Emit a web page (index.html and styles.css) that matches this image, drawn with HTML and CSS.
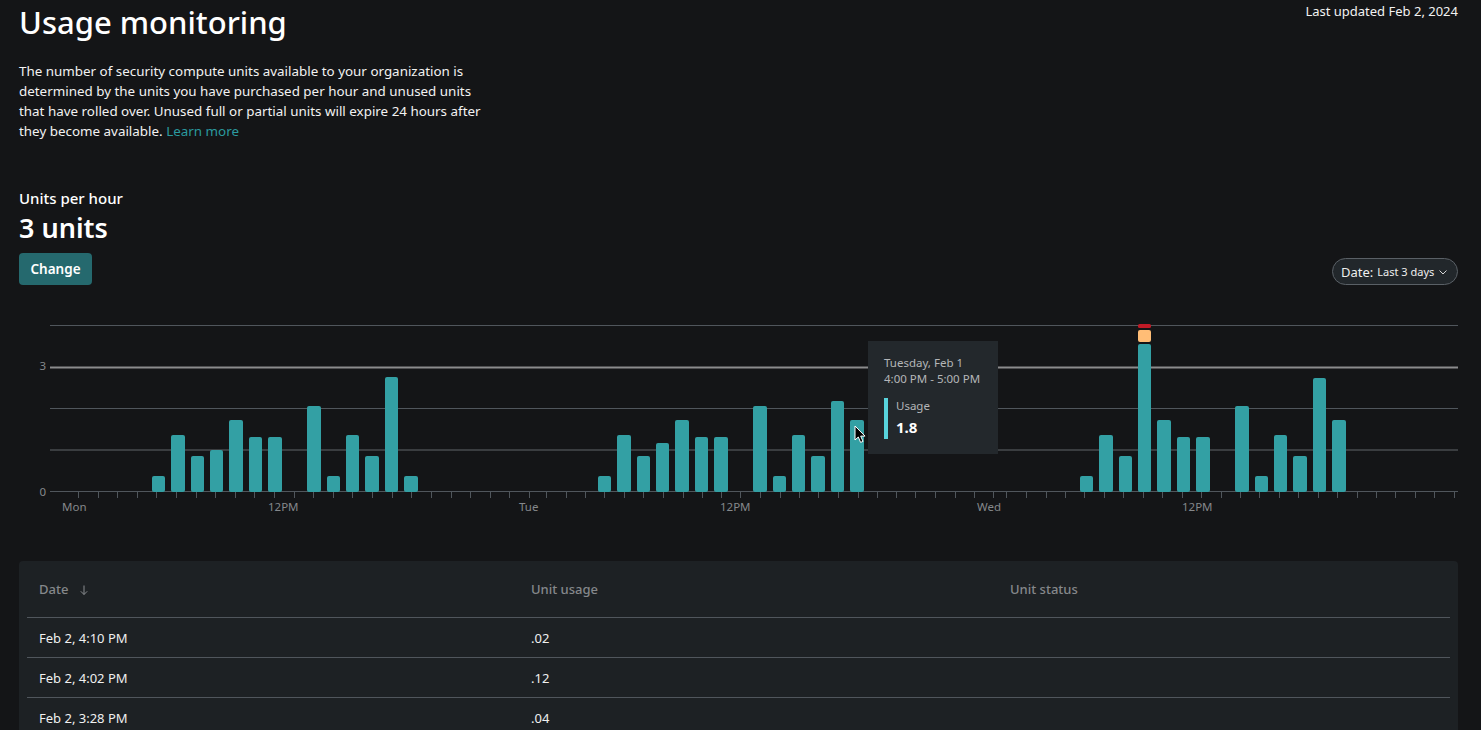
FILE: index.html
```html
<!DOCTYPE html>
<html lang="en">
<head>
    <meta charset="UTF-8">
    <title>Usage monitoring</title>
    <link rel="stylesheet" href="styles.css">
</head>
<body>
    <div class="page">
        <div class="top-row">
            <h1>Usage monitoring</h1>
            <span class="updated">Last updated Feb 2, 2024</span>
        </div>
        <p class="intro">The number of security compute units available to your organization is determined by the units you have purchased per hour and unused units that have rolled over. Unused full or partial units will expire 24 hours after they become available. <a href="#">Learn more</a></p>

        <div class="units-row">
            <div>
                <div class="units-label">Units per hour</div>
                <div class="units-value">3 units</div>
                <button class="change-btn">Change</button>
            </div>
            <button class="date-pill">
                Date: <span>Last 3 days</span>
                <svg width="10" height="10" viewBox="0 0 10 10"><path d="M1.5 3.5 5 7l3.5-3.5" fill="none" stroke="#d6d6d6" stroke-width="1"/></svg>
            </button>
        </div>

        <div class="chart">
            <svg class="chart-svg" width="1443" height="225" viewBox="19 300 1443 225">
                <path class="grid" d="M50 324.5H1458M50 407.5H1458"/>
                <path class="grid-limit" d="M50 366.5H1458"/>
                <path class="grid-dark" d="M50 449H1458"/>
                <path class="grid" d="M50 490.5H1458"/>
                <path class="grid" d="M78.5 491v6M98.5 491v6M117.5 491v6M137.5 491v6M156.5 491v6M176.5 491v6M196.5 491v6M215.5 491v6M235.5 491v6M254.5 491v6M274.5 491v6M294.5 491v6M313.5 491v6M333.5 491v6M352.5 491v6M372.5 491v6M392.5 491v6M411.5 491v6M431.5 491v6M451.5 491v6M470.5 491v6M490.5 491v6M509.5 491v6M529.5 491v6M546.5 491v6M566.5 491v6M585.5 491v6M604.5 491v6M624.5 491v6M643.5 491v6M663.5 491v6M683.5 491v6M702.5 491v6M721.5 491v6M740.5 491v6M760.5 491v6M780.5 491v6M799.5 491v6M818.5 491v6M838.5 491v6M858.5 491v6M877.5 491v6M896.5 491v6M915.5 491v6M935.5 491v6M955.5 491v6M974.5 491v6M993.5 491v6M1006.5 491v6M1026.5 491v6M1046.5 491v6M1065.5 491v6M1084.5 491v6M1104.5 491v6M1123.5 491v6M1143.5 491v6M1162.5 491v6M1182.5 491v6M1201.5 491v6M1221.5 491v6M1240.5 491v6M1259.5 491v6M1279.5 491v6M1298.5 491v6M1318.5 491v6M1337.5 491v6M1357.5 491v6M1376.5 491v6M1395.5 491v6M1415.5 491v6M1434.5 491v6M1454.5 491v6"/>

                <g class="bars">
                    <rect x="152" y="475" width="13" height="16" rx="2"/>
                    <rect x="171" y="434" width="14" height="57" rx="2"/>
                    <rect x="191" y="455" width="13" height="36" rx="2"/>
                    <rect x="210" y="449" width="13" height="42" rx="2"/>
                    <rect x="229" y="419" width="14" height="72" rx="2"/>
                    <rect x="249" y="436" width="13" height="55" rx="2"/>
                    <rect x="268" y="436" width="14" height="55" rx="2"/>
                    <rect x="307" y="405" width="14" height="86" rx="2"/>
                    <rect x="327" y="475" width="13" height="16" rx="2"/>
                    <rect x="346" y="434" width="13" height="57" rx="2"/>
                    <rect x="365" y="455" width="14" height="36" rx="2"/>
                    <rect x="385" y="376" width="13" height="115" rx="2"/>
                    <rect x="404" y="475" width="14" height="16" rx="2"/>

                    <rect x="598" y="475" width="13" height="16" rx="2"/>
                    <rect x="617" y="434" width="14" height="57" rx="2"/>
                    <rect x="637" y="455" width="13" height="36" rx="2"/>
                    <rect x="656" y="442" width="13" height="49" rx="2"/>
                    <rect x="675" y="419" width="14" height="72" rx="2"/>
                    <rect x="695" y="436" width="13" height="55" rx="2"/>
                    <rect x="714" y="436" width="14" height="55" rx="2"/>
                    <rect x="753" y="405" width="14" height="86" rx="2"/>
                    <rect x="773" y="475" width="13" height="16" rx="2"/>
                    <rect x="792" y="434" width="13" height="57" rx="2"/>
                    <rect x="811" y="455" width="14" height="36" rx="2"/>
                    <rect x="831" y="400" width="13" height="91" rx="2"/>
                    <rect x="850" y="419" width="14" height="72" rx="2"/>

                    <rect x="1080" y="475" width="13" height="16" rx="2"/>
                    <rect x="1099" y="434" width="14" height="57" rx="2"/>
                    <rect x="1119" y="455" width="13" height="36" rx="2"/>
                    <rect x="1138" y="343" width="13" height="148" rx="2"/>
                    <rect x="1157" y="419" width="14" height="72" rx="2"/>
                    <rect x="1177" y="436" width="13" height="55" rx="2"/>
                    <rect x="1196" y="436" width="14" height="55" rx="2"/>
                    <rect x="1235" y="405" width="14" height="86" rx="2"/>
                    <rect x="1255" y="475" width="13" height="16" rx="2"/>
                    <rect x="1274" y="434" width="13" height="57" rx="2"/>
                    <rect x="1293" y="455" width="14" height="36" rx="2"/>
                    <rect x="1313" y="377" width="13" height="114" rx="2"/>
                    <rect x="1332" y="419" width="14" height="72" rx="2"/>
                </g>
                <rect x="1138" y="329" width="13" height="12" rx="2" fill="#ffbd76"/>
                <rect x="1138" y="323" width="13" height="4" rx="1.5" fill="#c01a26"/>

                <g class="axis-text">
                    <text x="46" y="369" text-anchor="end">3</text>
                    <text x="46" y="495" text-anchor="end">0</text>
                    <text x="62" y="510">Mon</text>
                    <text x="268" y="510">12PM</text>
                    <text x="519" y="510">Tue</text>
                    <text x="720" y="510">12PM</text>
                    <text x="977" y="510">Wed</text>
                    <text x="1182" y="510">12PM</text>
                </g>
            </svg>

            <div class="tooltip">
                <div class="tooltip-date">Tuesday, Feb 1<br>4:00 PM - 5:00 PM</div>
                <div class="tooltip-series">
                    <div class="tooltip-key"></div>
                    <div>
                        <div class="tooltip-name">Usage</div>
                        <div class="tooltip-value">1.8</div>
                    </div>
                </div>
            </div>
            <svg class="cursor" width="13" height="20" viewBox="0 0 13 20"><path d="M1 1v14l3.3-3 2.3 5.4 2.4-1-2.3-5.3H11z" fill="#000" stroke="#fff" stroke-width="1"/></svg>
        </div>

        <div class="table-card">
            <div class="table-row table-head">
                <div>Date <svg class="sort-icon" width="12" height="12" viewBox="0 0 12 12"><path d="M6 1.5v9M2.8 7.3 6 10.5l3.2-3.2" fill="none" stroke="#8a8d90" stroke-width="1"/></svg></div>
                <div>Unit usage</div>
                <div>Unit status</div>
            </div>
            <div class="table-row">
                <div>Feb 2, 4:10 PM</div>
                <div>.02</div>
                <div></div>
            </div>
            <div class="table-row">
                <div>Feb 2, 4:02 PM</div>
                <div>.12</div>
                <div></div>
            </div>
            <div class="table-row">
                <div>Feb 2, 3:28 PM</div>
                <div>.04</div>
                <div></div>
            </div>
        </div>
    </div>
</body>
</html>
```

FILE: styles.css
```css
html, body {
    margin: 0;
    height: 730px;
    overflow: hidden;
    background-color: #141517;
}
body {
    font-family: "Noto Sans", Arial, sans-serif;
    color: #fff;
}
.page {
    padding: 0 23px 0 19px;
}
.top-row {
    display: flex;
    justify-content: space-between;
    align-items: flex-start;
}
h1 {
    margin: 0;
    font-size: 31px;
    font-weight: 500;
    line-height: 44px;
}
.updated {
    font-size: 13px;
    line-height: 22px;
    color: #f2f2f2;
}
.intro {
    width: 478px;
    margin: 17px 0 0;
    font-size: 13.4px;
    line-height: 20px;
    color: #f2f2f2;
}
.intro a {
    color: #2b9a9f;
    text-decoration: none;
}
.units-row {
    display: flex;
    justify-content: space-between;
    align-items: flex-end;
    margin-top: 46px;
}
.units-label {
    font-size: 15px;
    font-weight: 500;
    line-height: 22px;
}
.units-value {
    font-size: 27px;
    font-weight: 600;
    line-height: 38px;
}
.change-btn {
    display: block;
    width: 73px;
    height: 32px;
    margin-top: 6px;
    padding: 0;
    background-color: #25696e;
    color: #fff;
    border: none;
    border-radius: 4px;
    font-family: inherit;
    font-size: 13.5px;
    font-weight: 600;
}
.date-pill {
    display: flex;
    align-items: center;
    gap: 4px;
    width: 126px;
    height: 27px;
    padding: 0 8px;
    box-sizing: border-box;
    background-color: #22272b;
    color: #eee;
    border: 1px solid #5a6066;
    border-radius: 14px;
    font-family: inherit;
    font-size: 13px;
    white-space: nowrap;
}
.date-pill span {
    font-size: 11px;
}
.chart {
    position: relative;
    margin-top: 16px;
    height: 225px;
}
.chart-svg {
    display: block;
}
.grid {
    stroke: #50565c;
    stroke-width: 1;
    fill: none;
}
.grid-limit {
    stroke: #8b8c8d;
    stroke-width: 2;
    fill: none;
}
.grid-dark {
    stroke: #3a3d40;
    stroke-width: 2;
    fill: none;
}
.bars rect {
    fill: #33a0a4;
}
.axis-text text {
    font-family: "Noto Sans", Arial, sans-serif;
    font-size: 11.5px;
    fill: #85888b;
}
.tooltip {
    position: absolute;
    left: 849px;
    top: 40px;
    width: 130px;
    height: 113px;
    padding: 14px 16px 0;
    box-sizing: border-box;
    background-color: #23282c;
    color: #b4b6b8;
    font-size: 11.5px;
    line-height: 16px;
}
.tooltip-series {
    display: flex;
    gap: 8px;
    margin-top: 11px;
}
.tooltip-key {
    width: 4px;
    height: 41px;
    background-color: #58d3dc;
}
.tooltip-value {
    margin-top: 3px;
    color: #fff;
    font-size: 15px;
    font-weight: 700;
    line-height: 20px;
}
.cursor {
    position: absolute;
    left: 835px;
    top: 124px;
}
.table-card {
    margin-top: 35px;
    padding: 0 8px;
    height: 200px;
    background-color: #1d2124;
    border-radius: 4px;
}
.table-row {
    display: grid;
    grid-template-columns: 492px 479px 1fr;
    align-items: center;
    height: 39px;
    padding: 0 12px;
    border-bottom: 1px solid #50565c;
    font-size: 13px;
    color: #f0f0f0;
}
.table-head {
    height: 56px;
    color: #85888b;
    font-weight: 500;
}
.sort-icon {
    margin-left: 6px;
    vertical-align: -2px;
}
```
